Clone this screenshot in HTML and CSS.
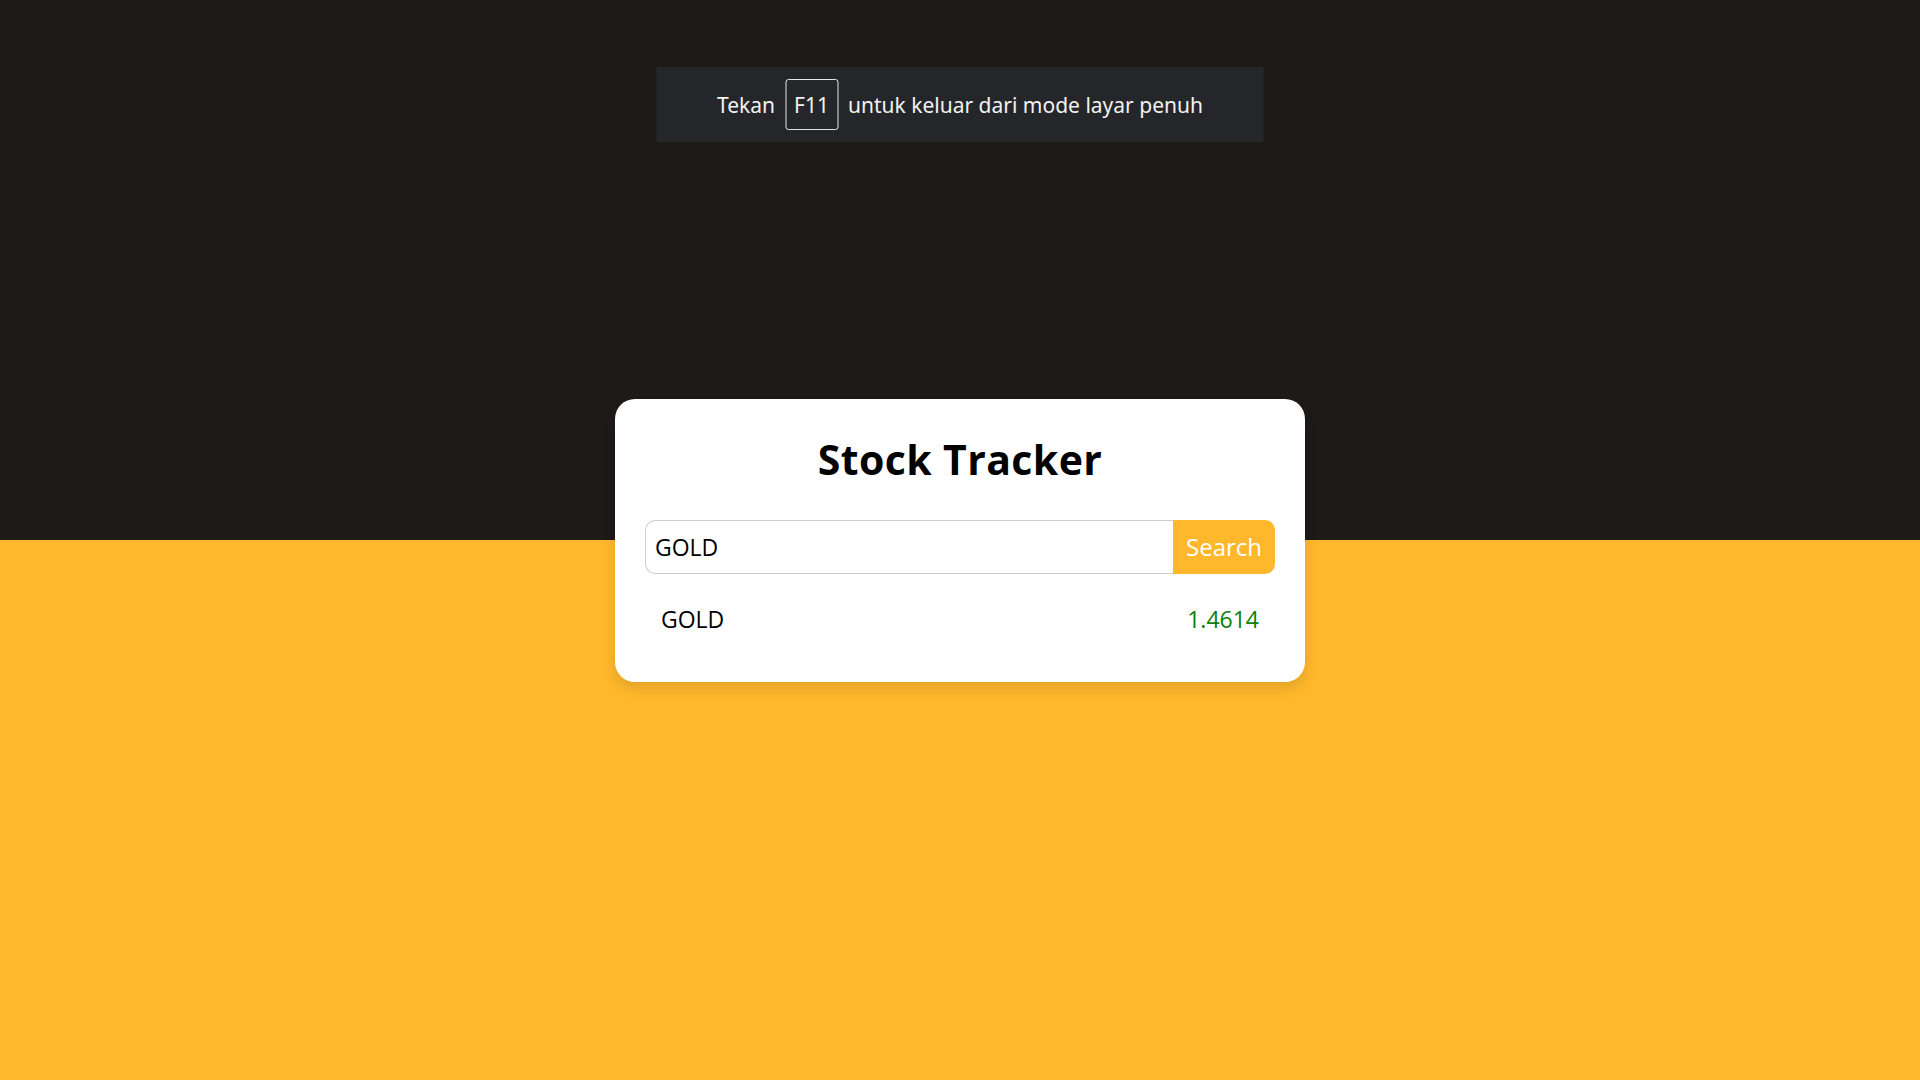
FILE: index.html
```html
<!DOCTYPE html>
<html lang="id">
<head>
<meta charset="utf-8">
<title>Stock Tracker</title>
<link rel="stylesheet" href="styles.css">
</head>
<body>
<div class="toast">
  <span>Tekan</span>
  <span class="key">F11</span>
  <span>untuk keluar dari mode layar penuh</span>
</div>
<main class="card">
  <h1 class="title">Stock Tracker</h1>
  <form class="search" onsubmit="return false">
    <input class="search-input" type="text" value="GOLD">
    <button class="search-btn" type="submit">Search</button>
  </form>
  <div class="result">
    <span class="symbol">GOLD</span>
    <span class="price">1.4614</span>
  </div>
</main>
</body>
</html>
```

FILE: styles.css
```css
* { box-sizing: border-box; }
html, body { height: 100%; }
body {
  margin: 0;
  background: linear-gradient(to bottom, #1d1a17 0, #1d1a17 50%, #ffb82c 50%, #ffb82c 100%);
  display: flex;
  align-items: center;
  justify-content: center;
  font-family: "Open Sans", "Liberation Sans", sans-serif;
}
.toast {
  position: absolute;
  top: 67px;
  left: 50%;
  transform: translateX(-50%);
  width: 607px;
  height: 75px;
  background: #25262a;
  color: #f2f2f2;
  display: flex;
  align-items: center;
  justify-content: center;
  gap: 10px;
  font-family: "Noto Sans", "Open Sans", sans-serif;
  font-size: 21px;
}
.key {
  border: 1px solid #e6e6e6;
  border-radius: 3px;
  width: 53px;
  height: 51px;
  display: flex;
  align-items: center;
  justify-content: center;
}
.card {
  width: 690px;
  background: #fff;
  border-radius: 20px;
  padding: 30px 30px 48px;
  box-shadow: 0 6px 14px rgba(0,0,0,0.12);
}
.title {
  margin: 0 0 31px;
  text-align: center;
  font-size: 41px;
  font-weight: 700;
  line-height: 60px;
  color: #000;
  letter-spacing: 0.4px;
}
.search {
  display: flex;
  height: 54px;
  margin: 0;
}
.search-input {
  flex: 1;
  min-width: 0;
  border: 1px solid #cccccc;
  border-right: none;
  border-radius: 10px 0 0 10px;
  padding: 0 9px;
  font-family: inherit;
  font-size: 23px;
  color: #000;
  outline: none;
}
.search-btn {
  width: 102px;
  border: none;
  background: #ffb82c;
  color: #fff;
  border-radius: 0 10px 10px 0;
  font-family: inherit;
  font-size: 24px;
  padding: 0;
}
.result {
  display: flex;
  justify-content: space-between;
  align-items: center;
  padding: 30px 16px 0;
  font-size: 23px;
  line-height: 30px;
}
.symbol { color: #000; }
.price { color: #0d800d; }
```
